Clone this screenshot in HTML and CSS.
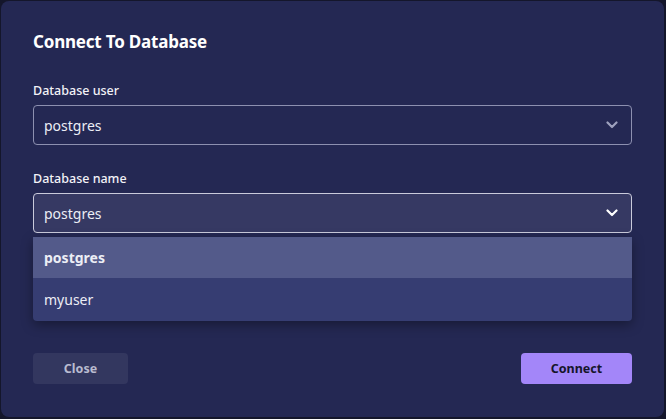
FILE: index.html
```html
<!DOCTYPE html>
<html>
<head>
<meta charset="utf-8">
<link rel="stylesheet" href="styles.css">
</head>
<body>
<div class="modal">
  <h1 class="title">Connect To Database</h1>
  <div class="field">
    <label class="label">Database user</label>
    <div class="select">
      <span>postgres</span>
      <svg class="chev" width="12" height="8" viewBox="0 0 12 8"><path d="M1.5 1.5 L6 6 L10.5 1.5" fill="none" stroke="currentColor" stroke-width="2.2" stroke-linecap="round" stroke-linejoin="round"/></svg>
    </div>
  </div>
  <div class="field field-open">
    <label class="label">Database name</label>
    <div class="select select-active">
      <span>postgres</span>
      <svg class="chev" width="12" height="8" viewBox="0 0 12 8"><path d="M1.5 1.5 L6 6 L10.5 1.5" fill="none" stroke="currentColor" stroke-width="2.2" stroke-linecap="round" stroke-linejoin="round"/></svg>
    </div>
    <ul class="menu">
      <li class="opt opt-selected">postgres</li>
      <li class="opt">myuser</li>
    </ul>
  </div>
  <div class="actions">
    <button class="btn btn-close">Close</button>
    <button class="btn btn-connect">Connect</button>
  </div>
</div>
</body>
</html>
```

FILE: styles.css
```css
html, body {
  margin: 0;
  padding: 0;
  background: #14162b;
  width: 666px;
  height: 419px;
  overflow: hidden;
}
body {
  padding: 1px 2px 2px 1px;
  box-sizing: border-box;
  font-family: "Noto Sans", "Open Sans", sans-serif;
}
.modal {
  box-sizing: border-box;
  height: 416px;
  background: #242853;
  border-radius: 8px;
  padding: 29px 32px 33px 32px;
  display: flex;
  flex-direction: column;
  color: #fff;
}
.title {
  margin: 0;
  font-size: 17px;
  font-weight: 700;
  line-height: 24px;
  letter-spacing: -0.2px;
}
.field {
  margin-top: 28px;
  display: flex;
  flex-direction: column;
  position: relative;
}
.field + .field {
  margin-top: 25px;
}
.label {
  font-size: 12.5px;
  font-weight: 500;
  line-height: 18px;
  margin-bottom: 5px;
  color: #f2f2f7;
}
.select {
  box-sizing: border-box;
  height: 40px;
  border: 1px solid #8d90b0;
  border-radius: 4px;
  display: flex;
  align-items: center;
  justify-content: space-between;
  padding: 0 13px 0 10px;
  font-size: 14px;
  color: #eceef5;
}
.select .chev {
  color: #9ea1be;
}
.select-active {
  background: #363963;
  border-color: #c9cadb;
}
.select-active .chev {
  color: #ffffff;
}
.menu {
  list-style: none;
  margin: 4px 0 0 0;
  padding: 0;
  background: #363d72;
  border-radius: 0 0 4px 4px;
  box-shadow: 0 4px 12px rgba(0, 0, 0, 0.35);
  overflow: hidden;
}
.opt {
  height: 41px;
  display: flex;
  align-items: center;
  padding: 0 11px;
  font-size: 14px;
  color: #eceef5;
}
.opt + .opt {
  height: 43px;
}
.opt-selected {
  background: #535a8a;
  font-weight: 700;
}
.actions {
  margin-top: auto;
  display: flex;
  justify-content: space-between;
}
.btn {
  border: none;
  height: 31px;
  border-radius: 4px;
  font-family: inherit;
  font-size: 12.5px;
  font-weight: 700;
  cursor: pointer;
}
.btn-close {
  width: 95px;
  background: #33375f;
  color: #b9bbcf;
}
.btn-connect {
  width: 111px;
  background: #a386f9;
  color: #15152a;
}
```
